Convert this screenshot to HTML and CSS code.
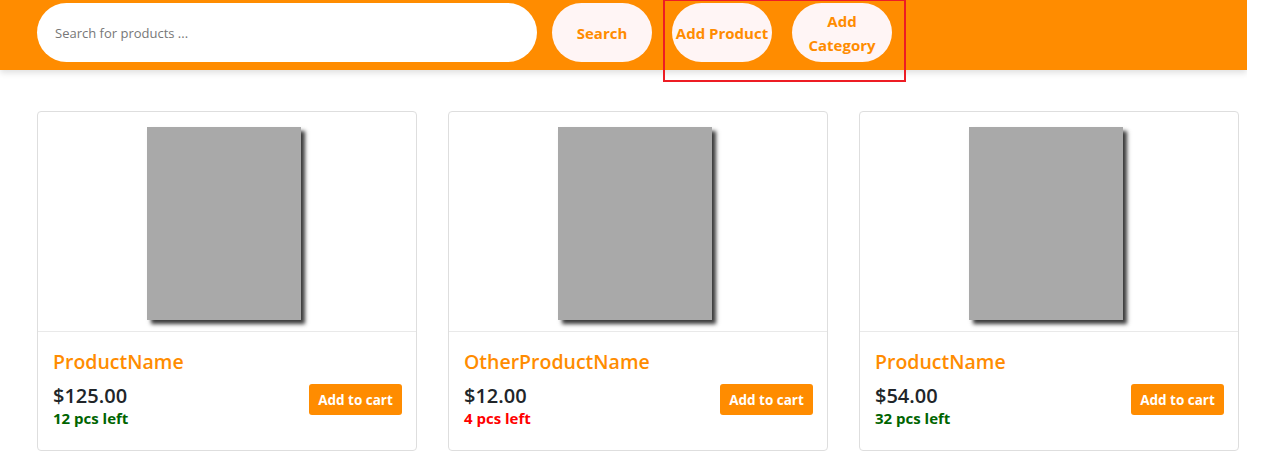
FILE: index.html
```html
<!DOCTYPE html>
<html lang="en">
<head>
<meta charset="utf-8">
<title>Shop</title>
<link rel="stylesheet" href="styles.css">
</head>
<body>
<header class="topbar">
  <input class="search-input" type="text" placeholder="Search for products ...">
  <button class="pill search-btn">Search</button>
  <div class="admin-group">
    <button class="pill">Add Product</button>
    <button class="pill">Add<br>Category</button>
  </div>
</header>
<div class="annotation"></div>
<main class="grid">
  <div class="card">
    <div class="card-img"><div class="placeholder"></div></div>
    <div class="card-body">
      <div class="name">ProductName</div>
      <div class="row">
        <div class="info">
          <div class="price">$125.00</div>
          <div class="stock ok">12 pcs left</div>
        </div>
        <button class="cart-btn">Add to cart</button>
      </div>
    </div>
  </div>
  <div class="card">
    <div class="card-img"><div class="placeholder"></div></div>
    <div class="card-body">
      <div class="name">OtherProductName</div>
      <div class="row">
        <div class="info">
          <div class="price">$12.00</div>
          <div class="stock low">4 pcs left</div>
        </div>
        <button class="cart-btn">Add to cart</button>
      </div>
    </div>
  </div>
  <div class="card">
    <div class="card-img"><div class="placeholder"></div></div>
    <div class="card-body">
      <div class="name">ProductName</div>
      <div class="row">
        <div class="info">
          <div class="price">$54.00</div>
          <div class="stock ok">32 pcs left</div>
        </div>
        <button class="cart-btn">Add to cart</button>
      </div>
    </div>
  </div>
</main>
</body>
</html>
```
FILE: styles.css
```css
* { box-sizing: border-box; }
html, body { margin: 0; padding: 0; background: #fff; }
body {
  font-family: "Open Sans", "Liberation Sans", sans-serif;
  color: #212529;
  width: 1247px;
  position: relative;
}
.topbar {
  height: 70px;
  background: #ff8c00;
  display: flex;
  align-items: flex-start;
  padding: 3px 0 0 37px;
  box-shadow: 0 3px 6px rgba(0,0,0,0.12);
}
.search-input {
  width: 500px;
  height: 59px;
  border: none;
  border-radius: 30px;
  background: #fff;
  padding: 0 18px;
  font-family: inherit;
  font-size: 13px;
  color: #333;
  outline: none;
}
.search-input::placeholder { color: #777; }
.pill {
  width: 100px;
  height: 59px;
  border: none;
  border-radius: 30px;
  background: #fff5f5;
  color: #ff8c00;
  font-family: inherit;
  font-weight: 700;
  font-size: 15px;
  line-height: 24px;
  padding: 0;
  white-space: nowrap;
}
.search-btn { margin-left: 15px; }
.admin-group {
  display: flex;
  gap: 20px;
  margin-left: 20px;
}
.annotation {
  position: absolute;
  left: 663px;
  top: -1px;
  width: 243px;
  height: 83px;
  border: 2px solid #ed1c24;
  pointer-events: none;
}
.grid {
  display: flex;
  gap: 31px;
  padding: 41px 0 0 37px;
}
.card {
  width: 380px;
  height: 340px;
  border: 1px solid #dedede;
  border-radius: 4px;
  display: flex;
  flex-direction: column;
}
.card-img {
  display: flex;
  justify-content: center;
  padding: 15px 6px 11px 0;
  border-bottom: 1px solid #e9e9e9;
}
.placeholder {
  width: 154px;
  height: 193px;
  background: #a9a9a9;
  box-shadow: 4px 4px 4px #3a3a3a;
}
.card-body {
  padding: 18px 14px 0 15px;
}
.name {
  color: #ff8c00;
  font-weight: 600;
  font-size: 19.5px;
  line-height: 24px;
}
.row {
  display: flex;
  justify-content: space-between;
  align-items: flex-start;
  margin-top: 10px;
}
.price {
  font-size: 20px;
  font-weight: 600;
  line-height: 24px;
  color: #212529;
}
.stock {
  font-size: 15px;
  font-weight: 700;
  line-height: 20px;
}
.stock.ok { color: #006400; }
.stock.low { color: #ff0000; }
.cart-btn {
  width: 93px;
  height: 31px;
  margin-top: 0;
  border: none;
  border-radius: 3px;
  background: #ff8c00;
  color: #fff;
  font-family: inherit;
  font-weight: 700;
  font-size: 13.5px;
  padding: 0;
}
```
